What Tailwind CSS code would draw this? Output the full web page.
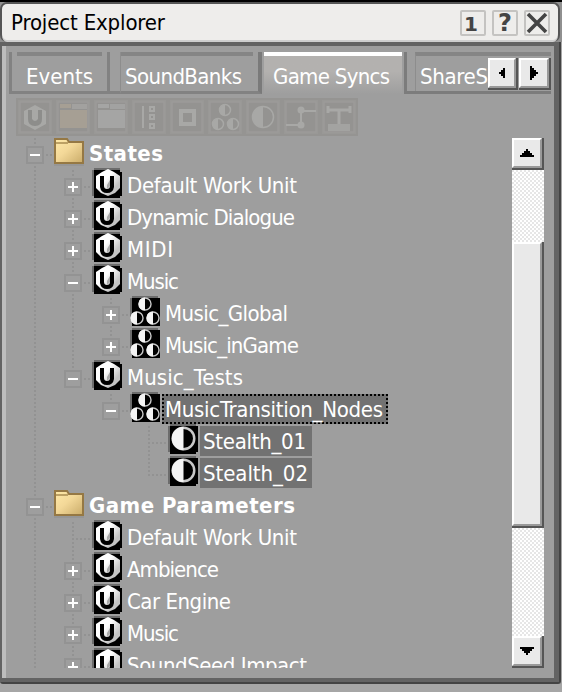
<!DOCTYPE html>
<html lang="en">
<head>
<meta charset="utf-8">
<title>Project Explorer</title>
<script src="https://cdn.jsdelivr.net/npm/@tailwindcss/browser@4"></script>
</head>
<body class="w-[562px] h-[692px] overflow-hidden bg-[#a6a6a6] font-['DejaVu_Sans_Condensed','DejaVu_Sans',sans-serif] text-[22px] leading-[30px] text-white">
<svg class="absolute size-0">
  <defs>
    <linearGradient id="gold" x1="0" y1="0" x2="1" y2="1"><stop offset="0" stop-color="#ffe9a8"/><stop offset=".45" stop-color="#f3d898"/><stop offset="1" stop-color="#c9ab69"/></linearGradient>
    <linearGradient id="metal" x1="0" y1="0" x2="1" y2="1"><stop offset=".4" stop-color="#fff"/><stop offset=".75" stop-color="#c4c4c4"/></linearGradient>
    <symbol id="half" viewBox="0 0 20 20"><circle cx="10" cy="10" r="8.6" fill="#000" stroke="#c8c8c8" stroke-width="2"/><path d="M10 .6A9.4 9.4 0 0 0 10 19.4z" fill="#f4f4f4"/></symbol>
    <symbol id="unit" viewBox="0 0 30 30"><path d="M0 2h2V0h26v2H2v26H0z" fill="#6c6c6c"/><path d="M2 2h26v2h2v24h-2v2H2z" fill="#000"/><path d="M16 1l6 3 6 4v12l-5 5-7 3-7-3-5-5V8l6-4z" fill="url(#metal)"/><path d="M8 8h4v10q0 3 3 3t3-3V8h4v11q-1 6-7 6t-7-6z" fill="#000"/><path d="M18 12v6l-3 3v-4z" fill="#aaa"/></symbol>
    <symbol id="group" viewBox="0 0 30 30"><path d="M0 2h2V0h26v2H2v22H0z" fill="#6c6c6c"/><path d="M2 2h28v28H2z" fill="#000"/><use href="#half" x="8" y="1" width="14" height="14"/><use href="#half" x="0" y="15" width="14" height="14"/><use href="#half" x="16" y="15" width="14" height="14"/></symbol>
    <symbol id="state" viewBox="0 0 30 30"><path d="M0 2h2V0h26v2H2v26H0z" fill="#6c6c6c"/><path d="M2 2h28v26h-2v2H2z" fill="#000"/><use href="#half" x="3" y="2" width="25" height="25"/></symbol>
    <symbol id="folder" viewBox="0 0 30 30"><path d="M1 3h12l2 3h14v21H1z" fill="url(#gold)" stroke="#957844" stroke-width="2"/><path d="M2 7h12" stroke="#a88b50" stroke-width="1.5"/><path d="M0 29h30" stroke="#939393" stroke-width="1.5"/></symbol>
  </defs>
</svg>
<div class="flex h-[692px] flex-col border-t-2 border-black">
  <header class="flex h-[40px] shrink-0 bg-[#909090]">
    <div class="flex h-[40px] w-[560px] items-center rounded-[7px] border-2 border-b-0 border-[#555] bg-[#eeedeb] pl-[9px] pr-[8px] text-black shadow-[inset_0_-2px_0_#cfcfcf]">
      <span data-w="153" class="whitespace-pre">Project Explorer</span>
      <div class="ml-auto flex gap-[6px] text-[#444]">
        <div class="flex size-[26px] items-center justify-center rounded-[2px] border-2 border-[#c4c3c1] pr-1 pt-[2px] font-['DejaVu_Sans'] text-[20px] font-bold leading-none">1</div>
        <div class="flex size-[26px] items-center justify-center rounded-[2px] border-2 border-[#c4c3c1] font-['DejaVu_Sans'] text-[24px] font-bold leading-none">?</div>
        <div class="size-[26px] rounded-[2px] border-2 border-[#c4c3c1]"><svg class="size-[22px]" viewBox="0 0 22 22"><path d="M2 2L20 20M20 2L2 20" stroke="#444" stroke-width="3.6"/></svg></div>
      </div>
    </div>
  </header>
  <main class="flex h-[642px] w-[561px] shrink-0 flex-col rounded-b-[3px] border-b-2 border-r-2 border-[#434343]">
    <div class="flex h-[640px] flex-col border-b-4 border-l-2 border-r-[5px] border-t-[4px] border-[#636363]">
      <div class="flex h-[632px] flex-col border-l-4 border-[#bdbdbd] bg-[#9e9e9e] pt-[6px]">
        <nav class="flex h-[42px] shrink-0 pl-[3px]">
          <div class="h-[42px] w-[101px] border-x-[3px] border-b-[3px] border-[#828282] px-[5px]"><div class="border-t-4 border-[#858585] pl-[9px] pt-[6px]"><span data-w="66" class="whitespace-pre">Events</span></div></div>
          <div class="h-[42px] w-[10px] border-b-[3px] border-[#828282]"></div>
          <div class="h-[42px] w-[142px] border-b-[3px] border-l border-r-4 border-b-[#828282] border-l-[#8d8d8d] border-r-[#7a7a7a] pr-[5px]"><div class="border-t-4 border-[#858585] pl-[4px] pt-[6px]"><span data-w="116" class="whitespace-pre">SoundBanks</span></div></div>
          <div class="ml-[2px] h-[42px] w-[138px] border-t-4 border-white bg-linear-to-b from-[#b3b1af] from-40% to-[#9e9e9e] pl-[9px] pt-[6px]"><span data-w="116" class="whitespace-pre">Game Syncs</span></div>
          <div class="ml-[2px] flex h-[42px] w-[147px] border-b-[3px] border-l-[3px] border-[#7c7c7c]">
            <div class="ml-[8px] flex w-[136px] border-l border-t-4 border-l-[#8d8d8d] border-t-[#858585]">
              <div class="w-[72px] shrink-0 pl-[4px] pt-[6px]"><span data-w="67" class="whitespace-pre">ShareS</span></div>
              <div class="mt-[2px] flex gap-px">
                <div class="h-[32px] w-[30px] shrink-0 border-b-2 border-r-2 border-[#555]"><div class="flex h-[30px] w-[28px] items-center justify-center border-2 border-b-[#999] border-l-white border-r-[#999] border-t-white bg-[#e9e9e9]"><svg class="h-[10px] w-[6px]" viewBox="0 0 6 10" shape-rendering="crispEdges"><path d="M6 0v10H4V8H2V6H0V4h2V2h2V0z" fill="#000"/></svg></div></div>
                <div class="h-[32px] w-[32px] shrink-0 border-b-2 border-r-2 border-[#555]"><div class="flex size-[30px] items-center justify-center border-2 border-b-[#999] border-l-white border-r-[#999] border-t-white bg-[#e9e9e9]"><svg class="h-[14px] w-[8px]" viewBox="0 0 8 14" shape-rendering="crispEdges"><path d="M0 0v14h2v-2h2v-2h2V8h2V6H6V4H4V2H2V0z" fill="#000"/></svg></div></div>
              </div>
            </div>
          </div>
        </nav>
        <div id="tools" class="mt-[4px] flex h-[38px] shrink-0 pl-[10px]"></div>
        <div class="flex h-[532px] shrink-0 pl-[10px]">
          <div id="tree" class="h-[532px] w-[496px] overflow-hidden"></div>
          <div class="mt-[2px] flex h-[530px] w-[32px] flex-col justify-between bg-[repeating-conic-gradient(#ffffff_0%_25%,#e6e6e6_0%_50%)] bg-[length:4px_4px]">
            <div class="size-[32px] border-b-2 border-r-2 border-[#555] bg-[#e9e9e9]"><div class="flex size-[30px] items-center justify-center border-2 border-b-[#999] border-l-white border-r-[#999] border-t-white"><svg class="h-[8px] w-[14px]" viewBox="0 0 14 8" shape-rendering="crispEdges"><path d="M6 0h2v2h2v2h2v2h2v2H0V6h2V4h2V2h2z" fill="#000"/></svg></div></div>
            <div class="mt-[72px] h-[286px] border-b-2 border-r-2 border-[#555] bg-[#e9e9e9]"><div class="h-[284px] border-2 border-b-[#999] border-l-white border-r-[#999] border-t-white"></div></div>
            <div class="mt-auto size-[32px] border-b-2 border-r-2 border-[#555] bg-[#e9e9e9]"><div class="flex size-[30px] items-center justify-center border-2 border-b-[#999] border-l-white border-r-[#999] border-t-white"><svg class="h-[8px] w-[14px]" viewBox="0 0 14 8" shape-rendering="crispEdges"><path d="M0 0h14v2h-2v2h-2v2H8v2H6V6H4V4H2V2H0z" fill="#000"/></svg></div></div>
          </div>
        </div>
      </div>
    </div>
  </main>
</div>
<script>
// Disabled toolbar buttons
const half = (x, y, r) => `<circle cx="${x}" cy="${y}" r="${r}" fill="none" stroke="#a8a8a6" stroke-width="1.5"/><path d="M${x} ${y - r}A${r} ${r} 0 0 0 ${x} ${y + r}z" fill="#a8a8a6"/>`;
const glyphs = [
  '<path d="M19 7l11 6v13l-11 6-11-6V13z" fill="#a8a8a6"/><path d="M12 12v9q0 7 7 7t7-7v-9h-4v9q-3 4-6 0v-9z" fill="#8d8d8b"/>',
  '<path d="M6 6h11v4H6zM6 12h27v18H6z" fill="#a69f94"/><path d="M18 6h15v5H18z" fill="#a2a19f"/>',
  '<path d="M6 6h11v4H6zM6 12h27v18H6z" fill="#a5a5a4"/><path d="M18 6h15v5H18z" fill="#a2a2a1"/>',
  '<path d="M13 8v22M20 9h4v4h-4zM20 17h4v4h-4zM20 26h4v4h-4z" fill="none" stroke="#a8a8a6" stroke-width="2"/>',
  '<path d="M13 13h13v13H13z" fill="none" stroke="#a8a8a6" stroke-width="4"/>',
  half(19, 12, 5.5) + half(12, 26, 5.5) + half(27, 26, 5.5),
  half(19, 19, 10.5),
  '<path d="M34 13H19v14H4" fill="none" stroke="#a8a8a6" stroke-width="2"/><circle cx="19" cy="12" r="3.5" fill="#a8a8a6"/><circle cx="19" cy="27" r="3.5" fill="#a8a8a6"/>',
  '<path d="M8 8v7M30 8v7M8 12h22M19 12v15" fill="none" stroke="#a8a8a6" stroke-width="3"/><path d="M8 26h22v7H8z" fill="#a3a3a1"/>'
];
document.getElementById('tools').innerHTML = glyphs.map(g =>
  `<svg class="size-[38px] shrink-0" viewBox="0 0 38 38"><path d="M1 1h36v36H1z" fill="#999896" stroke="#959492" stroke-width="2"/><path d="M4 4h30v30H4z" fill="#949391" stroke="#9c9b99" stroke-width="1.5"/>${g}</svg>`).join('');

// Tree: guide cells, icon, label, label width, label style
const rows = [
  ['-', 'folder', 'States', 73, 'b'],
  ['v+', 'unit', 'Default Work Unit', 169],
  ['v+', 'unit', 'Dynamic Dialogue', 167],
  ['v+', 'unit', 'MIDI', 45],
  ['v-', 'unit', 'Music', 51],
  ['vv+', 'group', 'Music_Global', 122],
  ['vvp', 'group', 'Music_inGame', 133],
  ['vm', 'unit', 'Music_Tests', 115],
  ['v m', 'group', 'MusicTransition_Nodes', 217, 'f'],
  ['v  T', 'state', 'Stealth_01', 102, 's'],
  ['v  L', 'state', 'Stealth_02', 104, 's'],
  ['-', 'folder', 'Game Parameters', 205, 'b'],
  ['vT', 'unit', 'Default Work Unit', 169],
  ['v+', 'unit', 'Ambience', 91],
  ['v+', 'unit', 'Car Engine', 103],
  ['v+', 'unit', 'Music', 51],
  ['v+', 'unit', 'SoundSeed Impact', 179]
];
const cell = c => {
  const box = c !== ' ' && '+-pm'.includes(c);
  let s = '';
  if ('v+-T'.includes(c)) s += '<path d="M19 2V32"/>';
  if ('pmL'.includes(c)) s += '<path d="M19 2V20"/>';
  if (box) s += '<path d="M30 19H38"/>';
  if ('TL'.includes(c)) s += '<path d="M22 19H38"/>';
  s = c === ' ' ? '' : `<g stroke="#929292" stroke-width="2" stroke-dasharray="2 2">${s}</g>`;
  if (box) s += '<path d="M11 11h16v16H11z" fill="#9e9e9e" stroke="#939393" stroke-width="2"/><path d="M14 19h10" stroke="#fff" stroke-width="2"/>';
  if ('+p'.includes(c)) s += '<path d="M19 14v10" stroke="#fff" stroke-width="2"/>';
  return `<svg class="h-[32px] w-[38px] shrink-0" viewBox="0 0 38 32" shape-rendering="crispEdges">${s}</svg>`;
};
const styles = {
  b: 'mt-[3px] h-[29px] pl-[5px] font-bold whitespace-pre',
  n: 'mt-[3px] h-[29px] pl-[5px] whitespace-pre',
  s: 'ml-[2px] mt-[2px] h-[30px] w-[112px] bg-[#727272] pl-[3px] pt-px whitespace-pre',
  f: 'ml-[2px] mt-[2px] h-[30px] w-[226px] bg-[#727272] pl-[3px] pt-px whitespace-pre bg-[image:repeating-linear-gradient(90deg,#000_0_2px,transparent_2px_4px),repeating-linear-gradient(90deg,#000_0_2px,transparent_2px_4px),repeating-linear-gradient(0deg,#000_0_2px,transparent_2px_4px),repeating-linear-gradient(0deg,#000_0_2px,transparent_2px_4px)] bg-[size:100%_2px,100%_2px,2px_100%,2px_100%] bg-[position:0_0,0_100%,0_0,100%_0] bg-no-repeat'
};
document.getElementById('tree').innerHTML = rows.map(([g, icon, t, w, k]) =>
  `<div class="flex h-[32px]">${[...g].map(cell).join('')}<svg class="size-[30px] shrink-0"><use href="#${icon}"/></svg><div class="${styles[k || 'n']}"><span data-w="${w}" data-weight="${k === 'b' ? 'bold' : 'normal'}">${t}</span></div></div>`).join('');

const ctx = document.createElement('canvas').getContext('2d');
document.querySelectorAll('[data-w]').forEach(e => {
  ctx.font = `${e.dataset.weight || 'normal'} 22px "DejaVu Sans Condensed", "DejaVu Sans", sans-serif`;
  const t = e.textContent;
  e.style.letterSpacing = ((+e.dataset.w + 1 - ctx.measureText(t).width) / (t.length - 1)).toFixed(3) + 'px';
});
</script>
</body>
</html>
